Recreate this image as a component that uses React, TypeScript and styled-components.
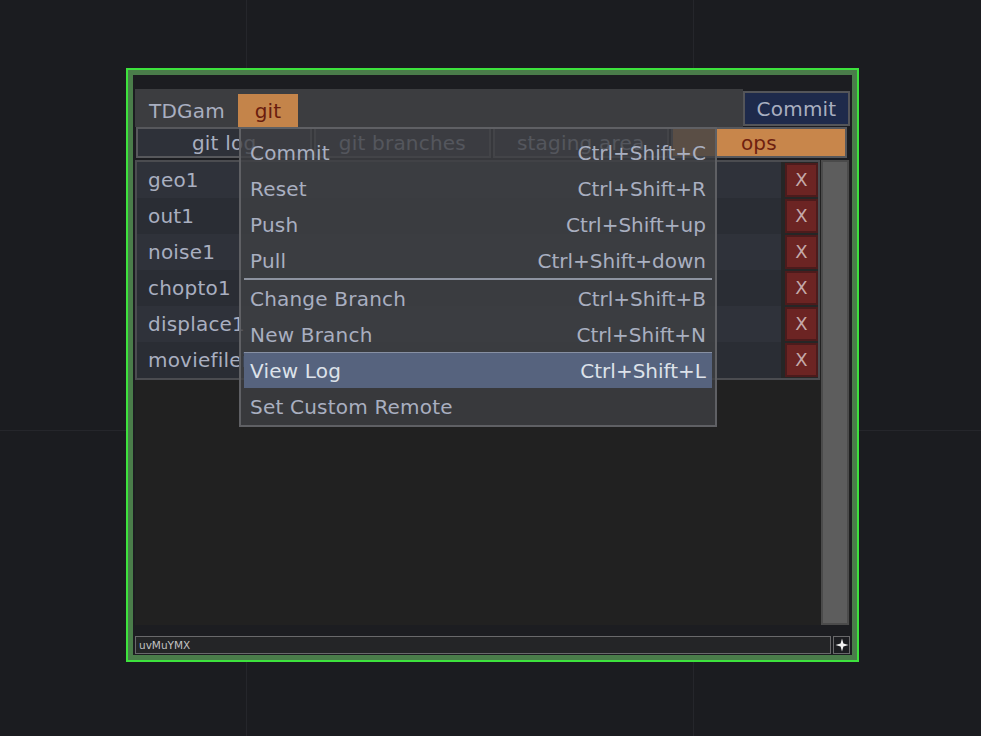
import styled, { createGlobalStyle } from "styled-components";

const GlobalStyle = createGlobalStyle`
  body {
    margin: 0;
    background: #1b1c20;
    font-family: "DejaVu Sans", "Liberation Sans", sans-serif;
  }
`;

const Canvas = styled.div`
  width: 981px;
  height: 736px;
  box-sizing: border-box;
  padding: 68px 0 0 126px;
  background-color: #1b1c20;
  background-image: linear-gradient(to right, transparent 246px, #25262b 246px, #25262b 247px, transparent 247px),
    linear-gradient(to right, transparent 693px, #25262b 693px, #25262b 694px, transparent 694px),
    linear-gradient(to bottom, transparent 430px, #25262b 430px, #25262b 431px, transparent 431px);
  overflow: hidden;
`;

const Frame = styled.div`
  width: 733px;
  height: 594px;
  box-sizing: border-box;
  border: 2px solid #3de23d;
  background: #4a7d4a;
  padding: 5px;
`;

const Inner = styled.div`
  position: relative;
  height: 580px;
  box-sizing: border-box;
  padding: 14px 2px 1px 2px;
  background: #1c1d21;
  display: flex;
  flex-direction: column;
  font-size: 20px;
  letter-spacing: 0.2px;
  color: #a9afc0;
`;

const Header = styled.div`
  display: flex;
  height: 38px;
`;

const HeaderBar = styled.div`
  width: 608px;
  background: #3c3d40;
  display: flex;
  align-items: flex-end;
`;

const Title = styled.div`
  width: 77px;
  padding: 0 12px 0 14px;
  line-height: 31px;
  white-space: nowrap;
`;

const MenuTab = styled.div`
  width: 60px;
  height: 33px;
  box-sizing: border-box;
  padding-top: 2px;
  line-height: 31px;
  text-align: center;
  background: #c4844a;
  color: #6a1c0e;
`;

const CommitButton = styled.div`
  margin-top: 2px;
  width: 107px;
  height: 35px;
  box-sizing: border-box;
  border: 2px solid #545559;
  padding-top: 1px;
  background: #1e2a4b;
  line-height: 30px;
  text-align: center;
`;

const Tabs = styled.div`
  display: flex;
  gap: 2px;
  height: 31px;
  padding: 0 3px 0 1px;
`;

const Tab = styled.div<{ $active?: boolean }>`
  flex: 1;
  box-sizing: border-box;
  border: 2px solid #57585c;
  background: ${(p) => (p.$active ? "#c8864b" : "#2e3139")};
  color: ${(p) => (p.$active ? "#6e1f10" : "#a9afc0")};
  padding-top: 2px;
  line-height: 25px;
  text-align: center;
`;

const Body = styled.div`
  margin-top: 2px;
  height: 465px;
  display: flex;
  align-items: flex-start;
  background: #212121;
`;

const List = styled.div`
  width: 685px;
  box-sizing: border-box;
  border: 2px solid #4b4c50;
  background: #262626;
`;

const Row = styled.div`
  display: flex;
  height: 36px;
`;

const Name = styled.div<{ $odd?: boolean }>`
  flex: 1;
  margin-right: 4px;
  padding: 1px 0 0 11px;
  line-height: 35px;
  background: ${(p) => (p.$odd ? "#2a2d34" : "#2f323a")};
  white-space: nowrap;
  overflow: hidden;
`;

const RemoveButton = styled.div`
  width: 33px;
  height: 34px;
  margin: 1px 0;
  box-sizing: border-box;
  border: 2px solid #4c1b1c;
  background: #6c2423;
  color: #c4a9a9;
  font-size: 18px;
  line-height: 30px;
  text-align: center;
`;

const Scrollbar = styled.div`
  margin-left: 1px;
  width: 28px;
  height: 100%;
  box-sizing: border-box;
  border: 2px solid #4b4b4b;
  background: #5d5d5d;
`;

const Footer = styled.div`
  margin-top: 11px;
  height: 18px;
  display: flex;
  gap: 2px;
`;

const Field = styled.div`
  flex: 1;
  box-sizing: border-box;
  border: 1px solid #69696b;
  background: #242527;
  padding-left: 3px;
  font-size: 10.5px;
  letter-spacing: 0;
  line-height: 16px;
  color: #c2c2c2;
`;

const AddButton = styled.div`
  width: 17px;
  box-sizing: border-box;
  border: 1px solid #69696b;
  display: flex;
  align-items: center;
  justify-content: center;
`;

const Menu = styled.div`
  position: absolute;
  left: 106px;
  top: 52px;
  width: 478px;
  height: 300px;
  box-sizing: border-box;
  border: 2px solid #5f6064;
  background: rgba(63, 64, 67, 0.8);
  padding: 5px 3px 1px;
`;

const MenuItem = styled.div<{ $active?: boolean }>`
  display: flex;
  justify-content: space-between;
  align-items: center;
  height: 36px;
  box-sizing: border-box;
  padding: 2px 6px 0;
  white-space: nowrap;
  background: ${(p) => (p.$active ? "#56637e" : "transparent")};
  color: ${(p) => (p.$active ? "#dde2ea" : "#a9afc0")};
  box-shadow: ${(p) => (p.$active ? "inset 0 1px 0 #8790a3" : "none")};
`;

const Shortcut = styled.span`
  letter-spacing: 0;
`;

const Separator = styled.div`
  height: 2px;
  background: #8d93a0;
`;

const ops = ["geo1", "out1", "noise1", "chopto1", "displace1", "moviefilein1"];

const menuTop = [
  ["Commit", "Ctrl+Shift+C"],
  ["Reset", "Ctrl+Shift+R"],
  ["Push", "Ctrl+Shift+up"],
  ["Pull", "Ctrl+Shift+down"],
];

const menuBottom = [
  ["Change Branch", "Ctrl+Shift+B"],
  ["New Branch", "Ctrl+Shift+N"],
  ["View Log", "Ctrl+Shift+L"],
  ["Set Custom Remote", ""],
];

const PlusIcon = () => (
  <svg width="14" height="14" viewBox="0 0 14 14">
    <path d="M7 0.5 L8.4 5.6 L13.5 7 L8.4 8.4 L7 13.5 L5.6 8.4 L0.5 7 L5.6 5.6 Z" fill="#f2f2f2" />
  </svg>
);

const App = () => {
  return (
    <Canvas>
      <GlobalStyle />
      <Frame>
        <Inner>
          <Header>
            <HeaderBar>
              <Title>TDGam</Title>
              <MenuTab>git</MenuTab>
            </HeaderBar>
            <CommitButton>Commit</CommitButton>
          </Header>
          <Tabs>
            <Tab>git log</Tab>
            <Tab>git branches</Tab>
            <Tab>staging area</Tab>
            <Tab $active>ops</Tab>
          </Tabs>
          <Body>
            <List>
              {ops.map((name, i) => (
                <Row key={name}>
                  <Name $odd={i % 2 === 1}>{name}</Name>
                  <RemoveButton>X</RemoveButton>
                </Row>
              ))}
            </List>
            <Scrollbar />
          </Body>
          <Footer>
            <Field>uvMuYMX</Field>
            <AddButton>
              <PlusIcon />
            </AddButton>
          </Footer>

          <Menu>
            {menuTop.map(([label, key]) => (
              <MenuItem key={label}>
                <span>{label}</span>
                <Shortcut>{key}</Shortcut>
              </MenuItem>
            ))}
            <Separator />
            {menuBottom.map(([label, key]) => (
              <MenuItem key={label} $active={label === "View Log"}>
                <span>{label}</span>
                <Shortcut>{key}</Shortcut>
              </MenuItem>
            ))}
          </Menu>
        </Inner>
      </Frame>
    </Canvas>
  );
};

export default App;
